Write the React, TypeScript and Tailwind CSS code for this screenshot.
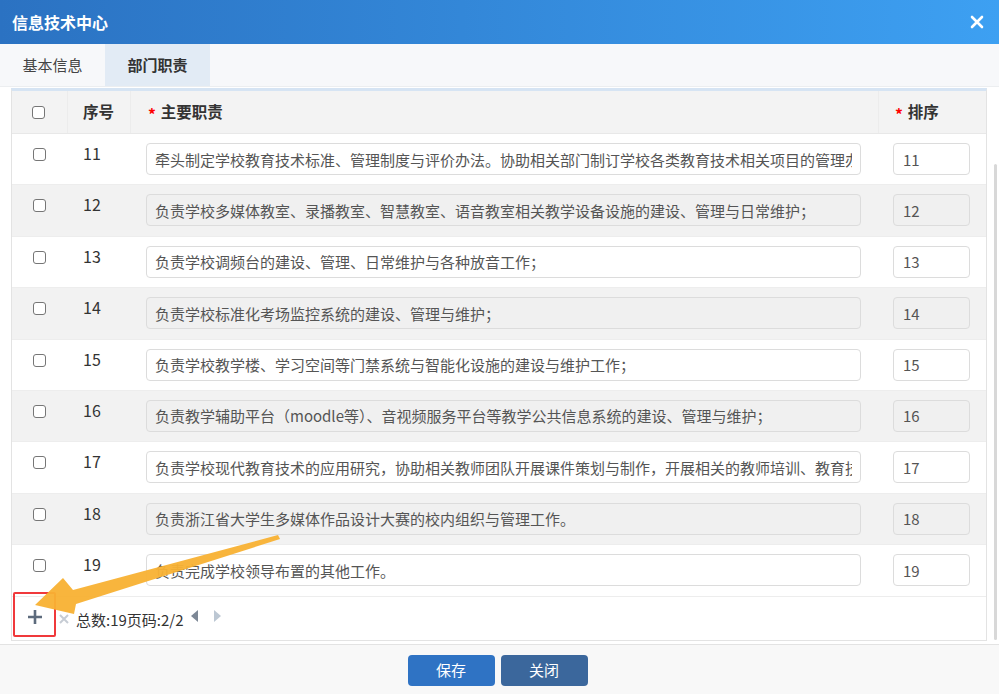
import React from "react";

const FONT = { fontFamily: '"Microsoft YaHei", "Noto Sans CJK SC", "Liberation Sans", sans-serif' };

interface Duty {
  no: number;
  text: string;
  sort: number;
}

const duties: Duty[] = [
  { no: 11, text: "牵头制定学校教育技术标准、管理制度与评价办法。协助相关部门制订学校各类教育技术相关项目的管理办法与实施细则；", sort: 11 },
  { no: 12, text: "负责学校多媒体教室、录播教室、智慧教室、语音教室相关教学设备设施的建设、管理与日常维护；", sort: 12 },
  { no: 13, text: "负责学校调频台的建设、管理、日常维护与各种放音工作；", sort: 13 },
  { no: 14, text: "负责学校标准化考场监控系统的建设、管理与维护；", sort: 14 },
  { no: 15, text: "负责学校教学楼、学习空间等门禁系统与智能化设施的建设与维护工作；", sort: 15 },
  { no: 16, text: "负责教学辅助平台（moodle等）、音视频服务平台等教学公共信息系统的建设、管理与维护；", sort: 16 },
  { no: 17, text: "负责学校现代教育技术的应用研究，协助相关教师团队开展课件策划与制作，开展相关的教师培训、教育技术咨询等工作；", sort: 17 },
  { no: 18, text: "负责浙江省大学生多媒体作品设计大赛的校内组织与管理工作。", sort: 18 },
  { no: 19, text: "负责完成学校领导布置的其他工作。", sort: 19 },
];

function Checkbox() {
  return <span className="block w-[13px] h-[13px] rounded-[3px] border border-[#767676] bg-white" />;
}

function Row({ d, odd }: { d: Duty; odd: boolean }) {
  const bg = odd ? "bg-[#f2f2f2]" : "bg-white";
  const inputBg = odd ? "bg-[#f0f0f0]" : "bg-white";
  return (
    <div className={`flex h-[51.4px] border-b border-[#ededed] ${bg}`}>
      <div className="w-[56px] flex justify-center pt-[14px] pr-[2px]">
        <Checkbox />
      </div>
      <div className="w-[63px] pl-[15px] pt-[7px] text-[16px] text-[#333]">{d.no}</div>
      <div className="w-[748px] pl-[15px] pr-[18px] pt-[9px]">
        <input
          readOnly
          value={d.text}
          className={`w-full h-[32px] rounded-[4px] border border-[#dcdcdc] ${inputBg} px-[8px] text-[15px] text-[#555] outline-none`}
          style={FONT}
        />
      </div>
      <div className="flex-1 pl-[14px] pt-[9px]">
        <input
          readOnly
          value={d.sort}
          className={`w-[77px] h-[32px] rounded-[4px] border border-[#dcdcdc] ${inputBg} px-[9px] text-[15px] text-[#555] outline-none`}
          style={FONT}
        />
      </div>
    </div>
  );
}

export default function App() {
  return (
    <div className="relative w-[999px] h-[694px] overflow-hidden bg-white flex flex-col" style={FONT}>
      {/* 标题栏 */}
      <div className="h-[44px] shrink-0 flex items-center justify-between px-[12px] bg-gradient-to-r from-[#2b72c2] to-[#3da0f2]">
        <span className="text-white text-[16px] font-bold">信息技术中心</span>
        <svg width="14" height="14" viewBox="0 0 14 14" className="mr-[3px]">
          <path d="M2 2 L12 12 M12 2 L2 12" stroke="white" strokeWidth="2.6" strokeLinecap="round" />
        </svg>
      </div>

      {/* 标签 */}
      <div className="h-[43px] shrink-0 flex bg-[#f7f8fa] border-b border-[#eceef0]">
        <div className="w-[105px] flex items-center justify-center text-[15px] text-[#444]">基本信息</div>
        <div className="w-[105px] flex items-center justify-center text-[15px] font-bold text-[#333] bg-[#e2ebf5]">部门职责</div>
      </div>

      {/* 内容 */}
      <div className="flex-1 flex pl-[11px] pt-[1px]">
        <div className="w-[976px] h-[553px] flex flex-col border border-[#e3e3e3] border-t-[3px] border-t-[#d6e4f3]">
          <div className="flex h-[43px] bg-[#f3f3f3] border-b border-[#e8e8e8] text-[15.5px] font-bold text-[#333]">
            <div className="w-[56px] flex items-center justify-center pr-[2px] border-r border-[#ececec]">
              <Checkbox />
            </div>
            <div className="w-[63px] flex items-center pl-[15px] border-r border-[#ececec]">序号</div>
            <div className="w-[748px] flex items-center pl-[17px] border-r border-[#ececec]">
              <span className="text-[#f00] mr-[5px] mt-[5px]">*</span>主要职责
            </div>
            <div className="flex-1 flex items-center pl-[16px]">
              <span className="text-[#f00] mr-[5px] mt-[5px]">*</span>排序
            </div>
          </div>
          {duties.map((d, i) => (
            <Row key={d.no} d={d} odd={i % 2 === 1} />
          ))}
          <div className="flex-1 flex items-center text-[15px] text-[#333]">
            <div className="relative w-[43px] h-[45px] ml-[1px] mt-[-8px] border-2 border-[#f0393b] rounded-[2px] flex items-center justify-center">
              <svg width="16" height="16" viewBox="0 0 16 16" className="mt-[6px]">
                <path d="M8 1 V15 M1 8 H15" stroke="#5d6b7d" strokeWidth="2.6" />
              </svg>
            </div>
            <svg width="12" height="12" viewBox="0 0 12 12" className="ml-[2px] mt-[2px]">
              <path d="M2 2 L10 10 M10 2 L2 10" stroke="#c6ccd4" strokeWidth="2" />
            </svg>
            <span className="ml-[6px] mt-[4px]">总数:19页码:2/2</span>
            <svg width="10" height="12" viewBox="0 0 10 12" className="ml-[6px] mb-[4px]">
              <path d="M8 0 L1 6 L8 12 Z" fill="#7d8896" />
            </svg>
            <svg width="10" height="12" viewBox="0 0 10 12" className="ml-[12px] mb-[4px]">
              <path d="M2 0 L9 6 L2 12 Z" fill="#bcc7d3" />
            </svg>
          </div>
        </div>
        <div className="w-[12px] pt-[76px] pl-[7px]">
          <div className="w-[3px] h-[476px] bg-[#d8d8d8] rounded-full" />
        </div>
      </div>

      {/* 底部按钮 */}
      <div className="h-[50px] shrink-0 border-t border-[#e3e3e3] bg-[#f8f8f8] flex justify-center gap-[6px] pt-[10px]">
        <button className="w-[87px] h-[31px] rounded-[4px] bg-[#2f73c4] text-white text-[15px] ml-[-4px]">保存</button>
        <button className="w-[87px] h-[31px] rounded-[4px] bg-[#3b679c] text-white text-[15px]">关闭</button>
      </div>

      {/* 标注箭头 */}
      <svg className="absolute left-0 top-0 pointer-events-none" width="999" height="694" viewBox="0 0 999 694">
        <path d="M278 535 L280 539 L76 604 L74 614 L35 605 L63 578 L73 590 Z" fill="#f8b133" opacity="0.95" />
      </svg>
    </div>
  );
}
